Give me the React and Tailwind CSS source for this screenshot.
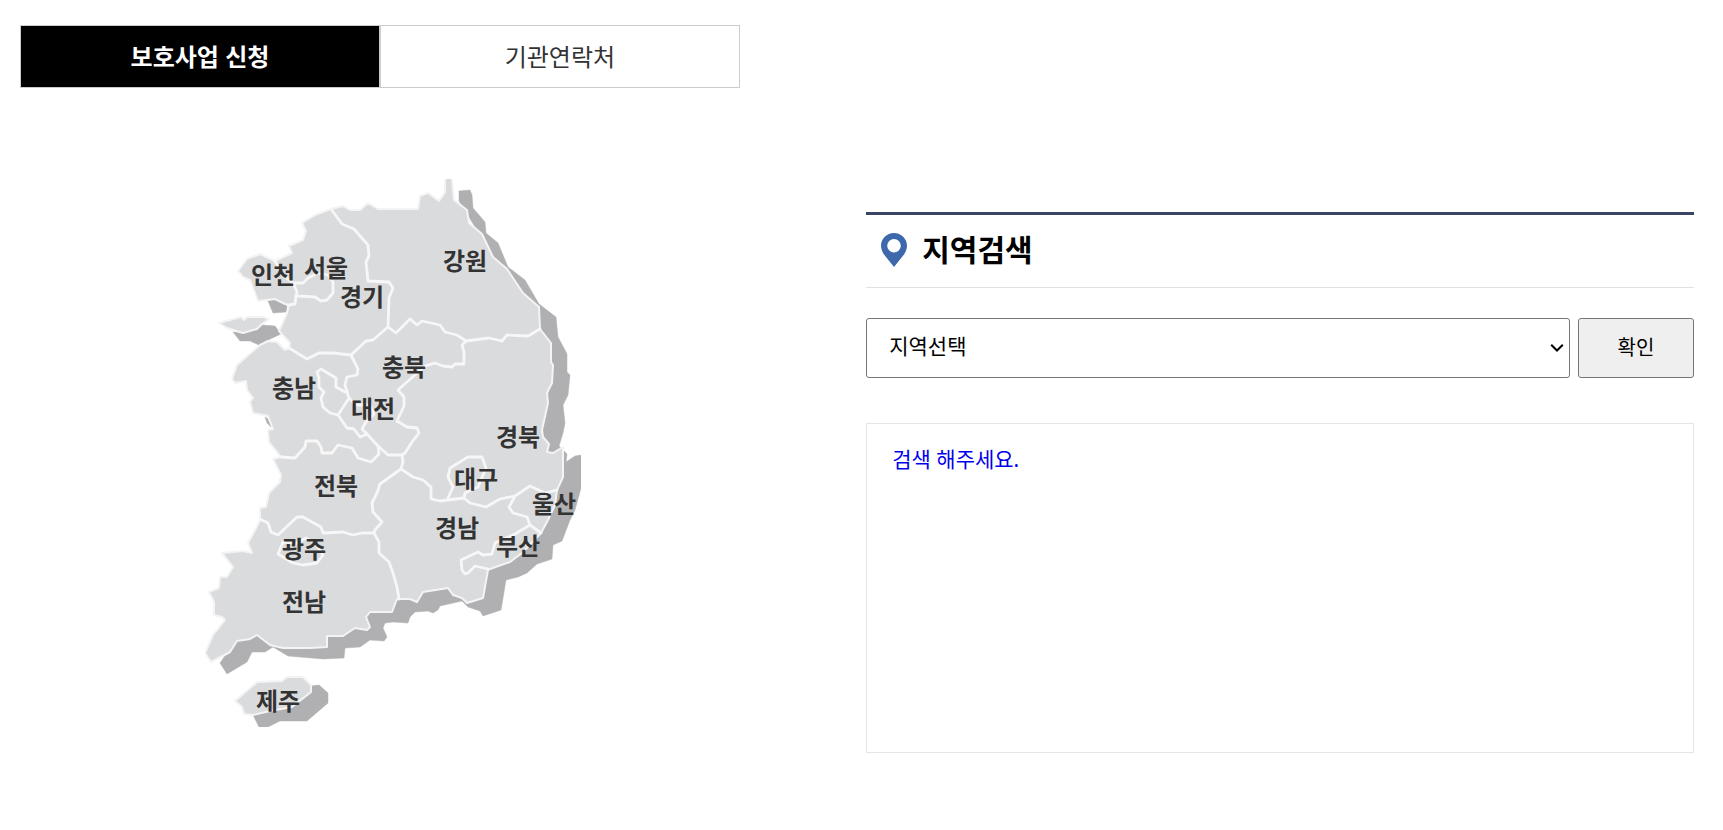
import React from "react";

const SHADOW =
  "M459 191 470 190 472 195 473 208 485 222 486 233 498 243 508 267 525 280 539 304 556 317 558 337 565 350 567 354 567 372 570 375 568 395 563 405 565 423 563 433 559 446 567 454 566 462 575 456 581 455 581 488 575 510 570 520 562 541 553 545 552 559 537 564 527 573 518 577 506 580 501 610 483 616 480 611 468 607 462 601 440 606 438 610 433 613 428 611 415 612 410 617 408 623 393 622 385 623 383 628 387 637 384 641 370 640 360 647 345 648 344 658 323 659 288 656 273 647 265 652 252 652 247 662 227 674 220 663 236 640 320 620 460 560 530 440 520 300 459 201Z";

const LAND =
  "M331 209 343 206 350 210 360 210 368 203 378 209 418 209 420 196 428 193 439 201 445 192 445 178 452 178 454 200 467 210 469 223 482 234 493 257 507 269 523 293 539 307 540 329 551 343 551 362 553 365 552 383 547 393 548 403 542 430 543 437 549 444 547 452 553 453 563 447 563 477 557 490 555 505 548 520 541 533 522 553 510 562 490 569 488 570 483 598 467 603 462 598 453 595 448 588 423 592 417 602 410 599 397 599 392 612 370 612 366 617 370 627 367 630 355 628 343 636 327 636 327 647 310 648 283 648 270 645 257 635 250 639 237 641 230 652 211 662 205 653 213 635 225 620 222 617 214 615 214 602 209 592 219 588 220 577 227 577 233 567 222 553 243 551 252 553 248 543 255 530 260 520 260 508 266 507 269 493 280 482 281 475 273 459 281 457 269 442 268 430 273 429 268 416 253 413 250 402 253 398 247 390 246 381 235 383 232 379 237 365 260 345 268 341 277 342 285 350 289 348 290 343 279 331 287 313 289 305 285 304 275 299 258 301 250 280 243 277 238 271 247 259 260 254 275 261 292 253 289 246 303 240 306 231 302 223 315 215Z";

const BORDERS = [
  "M331 209 342 224 354 229 368 245 369 256 366 262 368 281 389 282 393 288 389 298 388 327 396 333 410 319 417 325 422 321 440 325 445 332 457 335 466 341 489 338 502 341 507 335 528 336 540 329",
  "M388 327 373 340 366 341 351 355 333 353 319 353 307 359 289 348",
  "M275 261 283 275 293 283 303 283 308 278 318 273 328 275 333 282 333 293 327 300 321 301 315 297 296 296 297 292 293 283",
  "M296 296 295 304 289 305",
  "M351 355 358 369 357 375 347 377 345 385 349 398 338 415 347 428 354 429 360 437 367 434 378 446 379 454 371 462 358 458 352 448 338 445 332 453 322 453 321 447 317 441 306 441 305 447 295 458 281 457",
  "M345 392 336 387 336 378 321 369 317 372 319 378 319 387 324 392 321 398 323 407 330 413 338 415",
  "M349 398 356 405 370 405 374 414 366 422 362 429 367 434",
  "M466 341 462 345 464 352 464 364 455 364 452 367 443 366 435 363 425 366 398 390 404 397 404 406 397 421 407 427 417 428 419 433 412 442 405 453 402 455 388 455 378 446",
  "M402 455 403 462 401 469 380 484 377 493 372 503 373 512 382 522 375 530 374 533 379 542 379 553 389 562 393 573 397 587 399 599",
  "M401 469 413 477 423 480 431 487 431 499 440 501 464 498 470 503 486 507 500 499 515 496 530 486 545 493 557 490",
  "M448 498 453 487 448 477 450 468 468 457 482 457 486 468 478 487 465 493 464 498",
  "M515 496 509 507 513 513 527 517 530 525 541 533",
  "M530 525 515 534 495 543 492 554 483 555 478 552 461 560 462 570 465 574 468 573 475 566 488 569",
  "M260 519 268 523 271 532 278 535 297 517 303 517 321 527 323 533 343 532 353 535 362 533 374 533",
  "M278 554 283 542 297 543 306 538 315 543 323 555 317 563 303 565 293 563Z",
];

const REGIONS = [
  { name: "강원", x: 465, y: 270 },
  { name: "서울", x: 326, y: 277 },
  { name: "인천", x: 273, y: 284 },
  { name: "경기", x: 362, y: 306 },
  { name: "충북", x: 404, y: 376 },
  { name: "충남", x: 294, y: 397 },
  { name: "대전", x: 373, y: 418 },
  { name: "경북", x: 518, y: 446 },
  { name: "대구", x: 476, y: 488 },
  { name: "전북", x: 336, y: 495 },
  { name: "울산", x: 554, y: 513 },
  { name: "경남", x: 457, y: 537 },
  { name: "부산", x: 518, y: 555 },
  { name: "광주", x: 304, y: 558 },
  { name: "전남", x: 304, y: 611 },
  { name: "제주", x: 278, y: 710 },
];

function KoreaMap() {
  return (
    <svg
      viewBox="205 179 376 548"
      className="h-auto w-[376px] max-w-full"
      role="group"
      aria-label="지역 지도"
    >
      <g fill="#b0b0b2" stroke="#b0b0b2" strokeWidth="0.5" strokeLinejoin="round">
        <path d={SHADOW} />
        <path d="M268 301 278 299 287 306 286 312 273 313Z" />
        <path d="M233 332 245 333 262 325 275 326 281 334 268 340 259 345 250 341 240 341Z" />
        <path d="M265 417 268 419 271 427 267 423Z" />
        <path d="M311 686 319 685 328 693 328 703 307 721 280 721 268 727 259 727 253 715 290 690Z" />
      </g>
      <g fill="#dadbdd" stroke="#f4f4f5" strokeWidth="2" strokeLinejoin="round">
        <path d={LAND} />
        <path d="M219 323 241 317 244 320 247 317 263 317 269 319 262 324 257 329 243 333 227 328Z" />
        <path d="M235 701 257 682 282 681 287 677 303 677 311 685 311 692 292 707 270 711 253 715 244 714 242 707Z" />
      </g>
      <g fill="none" stroke="#f7f7f8" strokeWidth="2.8" strokeLinejoin="round" strokeLinecap="round">
        {BORDERS.map((d) => (
          <path key={d} d={d} />
        ))}
      </g>
      <g fill="#333333" textAnchor="middle" className="text-[24px] font-bold">
        {REGIONS.map((r) => (
          <a key={r.name} href={`#${r.name}`}>
            <text x={r.x} y={r.y}>
              {r.name}
            </text>
          </a>
        ))}
      </g>
    </svg>
  );
}

function PinIcon() {
  return (
    <svg viewBox="0 0 26 34" className="h-[34px] w-[26px] shrink-0" aria-hidden="true">
      <path
        fill="#3d69ac"
        fillRule="evenodd"
        d="M13 0C5.800 0 0 5.700 0 12.800c0 3.100 1.300 6 3 8.800L13 34l10-12.400c1.700-2.800 3-5.700 3-8.800C26 5.700 20.200 0 13 0Zm0 6a6.800 6.800 0 1 1 0 13.600A6.800 6.800 0 0 1 13 6Z"
      />
    </svg>
  );
}

export default function App() {
  return (
    <main className="bg-white pt-[25px] pr-[29px] pb-[76px] pl-5 font-['Noto_Sans','Noto_Sans_CJK_KR',sans-serif] text-black">
      <nav className="flex w-[43%] text-center text-[24px] leading-[61px]">
        <a href="#apply" aria-current="page" className="flex-1 border border-[#cccccc] bg-black font-bold text-white">
          보호사업 신청
        </a>
        <a href="#contact" className="flex-1 border border-[#cccccc] text-[#333333]">
          기관연락처
        </a>
      </nav>

      <div className="mt-[91px] flex items-start justify-between">
        <div className="flex w-[44.6%] justify-center">
          <KoreaMap />
        </div>

        <section className="mt-[33px] w-[49.45%]">
          <h2 className="flex items-center gap-[15px] border-t-3 border-b border-t-[#3a4563] border-b-[#e1e1e1] px-[15px] pb-0.5 text-[30px] leading-[70px] font-bold">
            <PinIcon />
            지역검색
          </h2>

          <form className="mt-[30px] flex gap-2" onSubmit={(e) => e.preventDefault()}>
            <div className="relative min-w-0 flex-1">
              <select
                aria-label="지역선택"
                className="h-[60px] w-full appearance-none rounded-[3px] border border-[#767676] bg-white pr-8 pb-0.5 pl-[22px] text-[21px] text-black"
              >
                <option>지역선택</option>
                {REGIONS.map((r) => (
                  <option key={r.name}>{r.name}</option>
                ))}
              </select>
              <svg
                viewBox="0 0 14 10"
                className="pointer-events-none absolute top-[25px] right-[6px] h-[10px] w-[14px]"
                fill="none"
                stroke="#000000"
                strokeWidth="2"
                aria-hidden="true"
              >
                <path d="M1.200 1.700 7 7.500 12.800 1.700" />
              </svg>
            </div>
            <button
              type="submit"
              className="h-[60px] w-[116px] rounded-[3px] border border-[#767676] bg-[#efefef] text-[20px]"
            >
              확인
            </button>
          </form>

          <div className="mt-[45px] min-h-[330px] border border-[#e5e5e5] px-[25px] pt-[19px] pb-5 text-[21px] leading-8 text-[#0000ee]">
            <a href="#search">검색 해주세요.</a>
          </div>
        </section>
      </div>
    </main>
  );
}
